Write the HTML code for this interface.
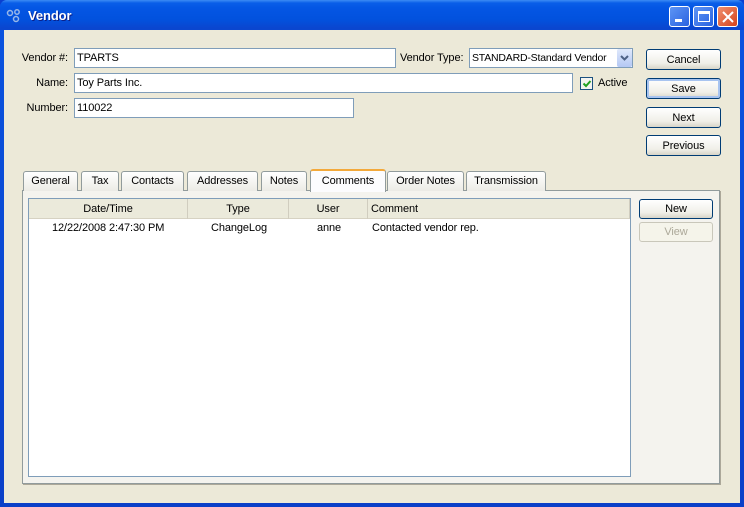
<!DOCTYPE html>
<html><head><style>
*{box-sizing:border-box;margin:0;padding:0}
body{width:744px;height:507px;overflow:hidden;font-family:"Liberation Sans","DejaVu Sans",sans-serif;font-size:11px;letter-spacing:-0.1px;color:#000;background:#0a3fd0}
.win{position:absolute;left:0;top:0;width:744px;height:507px;background:linear-gradient(#0a54e0,#0a3fc8);border-radius:7px 7px 0 0}
.title{position:absolute;left:0;top:0;width:744px;height:30px;border-radius:7px 7px 0 0;background:linear-gradient(#3d8cf4 0,#0a5ee8 3px,#0456e4 8px,#0251dd 20px,#0a46cf 28px,#0a46cf 30px)}
.tt{position:absolute;left:28px;top:8px;color:#fff;font-weight:bold;font-size:13px;text-shadow:1px 1px #0a1f88}
.client{position:absolute;left:4px;top:30px;width:736px;height:473px;background:#ece9d8}
.tb{position:absolute;top:6px;width:21px;height:21px;border:1px solid #fff;border-radius:3px;background:linear-gradient(135deg,#5d95f5,#2a62e0)}
.a{position:absolute;white-space:nowrap}
.lbl{position:absolute;text-align:right;white-space:nowrap}
.in{position:absolute;background:#fff;border:1px solid #7f9db9;padding:3px 2px;line-height:13px;overflow:hidden;white-space:nowrap}
.btn{position:absolute;left:646px;width:75px;height:21px;border:1px solid #003c74;border-radius:3px;background:linear-gradient(#fff,#f0efe8 70%,#d8d5c8);text-align:center;line-height:20px}
.tab{position:absolute;top:171px;height:20px;border:1px solid #919b9c;border-bottom:none;border-radius:3px 3px 0 0;background:linear-gradient(#fff,#ecebe5);text-align:center;line-height:19px}
.th{position:absolute;top:199px;height:20px;line-height:20px;text-align:center;border-right:1px solid #d0cdbf}
</style></head><body>
<div class="win"></div>
<div class="title"></div>
<svg class="a" style="left:6px;top:9px" width="16" height="14" viewBox="0 0 16 14"><circle cx="4" cy="4" r="2.5" fill="none" stroke="#9ab8e8" stroke-width="1.5"/><circle cx="11" cy="3" r="2.2" fill="none" stroke="#9ab8e8" stroke-width="1.5"/><circle cx="10" cy="10" r="2.5" fill="none" stroke="#9ab8e8" stroke-width="1.5"/></svg>
<div class="tt">Vendor</div>
<div class="tb" style="left:669px"><div class="a" style="left:5px;top:12px;width:7px;height:3px;background:#fff"></div></div>
<div class="tb" style="left:693px"><div class="a" style="left:4px;top:4px;width:12px;height:11px;border:1px solid #fff;border-top:3px solid #fff"></div></div>
<div class="tb" style="left:717px;background:linear-gradient(135deg,#f09070,#d6431c)"><svg class="a" style="left:4px;top:4px" width="12" height="12"><path d="M1 1L11 11M11 1L1 11" stroke="#fff" stroke-width="2"/></svg></div>
<div class="client"></div>
<div class="lbl" style="left:10px;width:58px;top:52px">Vendor #:</div>
<div class="in" style="left:74px;top:48px;width:322px;height:20px">TPARTS</div>
<div class="lbl" style="left:400px;top:52px">Vendor Type:</div>
<div class="in" style="left:469px;top:48px;width:164px;height:20px;font-size:10.5px;letter-spacing:-0.2px">STANDARD-Standard Vendor</div>
<div class="a" style="left:617px;top:49px;width:15px;height:18px;background:linear-gradient(#dfe8fb,#b4c8f4);border-radius:2px"><svg class="a" style="left:3px;top:6px" width="9" height="6"><path d="M1 1L4.5 4.5L8 1" stroke="#4d6185" stroke-width="2" fill="none"/></svg></div>
<div class="lbl" style="left:10px;width:58px;top:77px">Name:</div>
<div class="in" style="left:74px;top:73px;width:499px;height:20px">Toy Parts Inc.</div>
<div class="a" style="left:580px;top:77px;width:13px;height:13px;border:1px solid #1c5180;background:#f4f4f0"><svg class="a" style="left:1px;top:1px" width="10" height="10"><path d="M1.5 4.5L4 7L8.5 2" stroke="#21a121" stroke-width="2" fill="none"/></svg></div>
<div class="a" style="left:598px;top:77px">Active</div>
<div class="lbl" style="left:10px;width:58px;top:102px">Number:</div>
<div class="in" style="left:74px;top:98px;width:280px;height:20px">110022</div>
<div class="btn" style="top:49px">Cancel</div>
<div class="btn" style="top:78px;box-shadow:inset 0 0 0 2px #a8c4f0">Save</div>
<div class="btn" style="top:107px">Next</div>
<div class="btn" style="top:135px">Previous</div>
<div class="a" style="left:22px;top:190px;width:698px;height:294px;background:#f4f3ee;border:1px solid #919b9c;box-shadow:1px 1px 0 #aca899"></div>
<div class="tab" style="left:23px;width:55px">General</div>
<div class="tab" style="left:81px;width:38px">Tax</div>
<div class="tab" style="left:121px;width:63px">Contacts</div>
<div class="tab" style="left:187px;width:71px">Addresses</div>
<div class="tab" style="left:261px;width:46px">Notes</div>
<div class="tab" style="left:310px;top:169px;height:23px;width:76px;background:#fcfcfe;border-top:2px solid #f3a93b;line-height:20px">Comments</div>
<div class="tab" style="left:387px;width:77px">Order Notes</div>
<div class="tab" style="left:466px;width:80px">Transmission</div>
<div class="a" style="left:28px;top:198px;width:603px;height:279px;background:#fff;border:1px solid #7f9db9"></div>
<div class="a" style="left:29px;top:199px;width:601px;height:20px;background:#ebeadb;border-bottom:1px solid #d6d2c2"></div>
<div class="th" style="left:29px;width:159px">Date/Time</div>
<div class="th" style="left:188px;width:101px">Type</div>
<div class="th" style="left:289px;width:79px">User</div>
<div class="th" style="left:368px;width:262px;text-align:left;padding-left:3px">Comment</div>
<div class="a" style="left:52px;top:222px">12/22/2008 2:47:30 PM</div>
<div class="a" style="left:211px;top:222px">ChangeLog</div>
<div class="a" style="left:317px;top:222px">anne</div>
<div class="a" style="left:372px;top:222px">Contacted vendor rep.</div>
<div class="btn" style="left:639px;top:199px;width:74px;height:20px;line-height:19px">New</div>
<div class="btn" style="left:639px;top:222px;width:74px;height:20px;line-height:19px;border-color:#c9c7ba;background:#f5f4ea;color:#aca899">View</div>
</body></html>
